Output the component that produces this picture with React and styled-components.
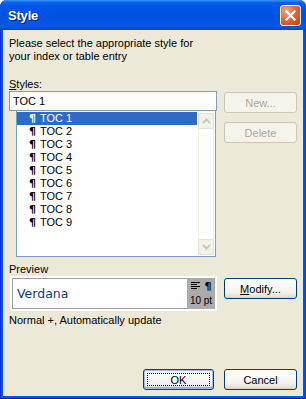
import React from "react";
import styled, { createGlobalStyle } from "styled-components";

const Global = createGlobalStyle`
  html, body { margin: 0; padding: 0; background: #ffffff; }
  body { font-family: "Liberation Sans", Arial, sans-serif; }
  * { box-sizing: border-box; }
`;

const Window = styled.div`
  width: 306px;
  height: 399px;
  display: flex;
  flex-direction: column;
  background: #0055e5;
  border-radius: 7px 7px 0 0;
  overflow: hidden;
  box-shadow: inset 1px 0 #0831d9, inset -1px 0 #0831d9, inset 0 -1px #001ea0;
`;

const TitleBar = styled.div`
  height: 30px;
  flex: none;
  display: flex;
  align-items: center;
  justify-content: space-between;
  padding: 0 5px 0 8px;
  background: linear-gradient(
    180deg,
    #3d95ff 0%,
    #0a62f0 8%,
    #0055e5 20%,
    #0052e0 60%,
    #0058ea 85%,
    #0050dd 94%,
    #0040c8 100%
  );
`;

const Title = styled.span`
  color: #ffffff;
  font: bold 13px "Liberation Sans", Arial, sans-serif;
  text-shadow: 1px 1px 0 #0a1e8c;
  letter-spacing: -0.2px;
`;

const CloseButton = styled.div`
  width: 21px;
  height: 21px;
  border: 1px solid #ffffff;
  border-radius: 3px;
  background: radial-gradient(circle at 30% 25%, #f0a58d 0%, #e2663f 45%, #c8401b 100%);
  display: flex;
  align-items: center;
  justify-content: center;
  margin-top: 1px;
`;

const Content = styled.div`
  flex: 1;
  margin: 0 3px 3px 3px;
  background: #ece9d8;
  display: flex;
  flex-direction: column;
  padding: 7px 6px 6px 6px;
  font: 11px "Liberation Sans", Arial, sans-serif;
  color: #000;
`;

const Text = styled.div`
  line-height: 13px;
  margin-top: ${(p) => p.$mt || 0}px;
  margin-left: ${(p) => p.$ml || 0}px;
  white-space: nowrap;
`;

const Section = styled.div`
  display: flex;
  gap: 7px;
  margin-top: ${(p) => p.$mt || 0}px;
`;

const LeftCol = styled.div`
  width: 208px;
  display: flex;
  flex-direction: column;
`;

const RightCol = styled.div`
  width: 73px;
  display: flex;
  flex-direction: column;
  gap: 9px;
  padding-top: ${(p) => p.$pt || 0}px;
`;

const Input = styled.div`
  height: 20px;
  border: 1px solid #7f9db9;
  background: #fff;
  padding: 0 3px;
  line-height: 18px;
`;

const List = styled.div`
  width: 200px;
  height: 147px;
  margin: -1px 0 0 7px;
  border: 1px solid #7f9db9;
  background: #fff;
  display: flex;
  padding: 1px 1px 1px 0;
`;

const Items = styled.div`
  flex: 1;
  display: flex;
  flex-direction: column;
  margin-right: 1px;
`;

const Item = styled.div`
  height: 13px;
  line-height: 13px;
  display: flex;
  align-items: center;
  padding-left: 12px;
  background: ${(p) => (p.$sel ? "#316ac5" : "transparent")};
  color: ${(p) => (p.$sel ? "#fff" : "#000")};
`;

const Pilcrow = styled.span`
  font: bold 11px "DejaVu Sans", sans-serif;
  width: 11px;
`;

const ScrollBar = styled.div`
  width: 16px;
  margin-top: 1px;
  display: flex;
  flex-direction: column;
  justify-content: space-between;
  background: #fdfdf9;
  border-left: 1px solid #f0efe8;
  border-right: 1px solid #f0efe8;
`;

const Arrow = styled.div`
  height: 16px;
  margin: 0 -1px;
  border: 1px solid #e6e4da;
  border-radius: 2px;
  background: #f3f2ea;
  display: flex;
  align-items: center;
  justify-content: center;
`;

const Button = styled.div`
  position: relative;
  width: ${(p) => p.$w || 73}px;
  height: 21px;
  border: 1px solid ${(p) => (p.$disabled ? "#c9c7ba" : "#003c74")};
  border-radius: 3px;
  background: ${(p) =>
    p.$disabled
      ? "#f5f4ea"
      : "linear-gradient(180deg, #ffffff 0%, #fbfbf9 35%, #f0efea 75%, #e3e0d6 92%, #d6d0c5 100%)"};
  color: ${(p) => (p.$disabled ? "#aca899" : "#000")};
  display: flex;
  align-items: center;
  justify-content: center;
  box-shadow: ${(p) => (p.$default ? "inset 0 0 0 1px #a6c1ee, inset 0 -1px 0 1px #89ade4" : "none")};
  &::after {
    content: "";
    display: ${(p) => (p.$default ? "block" : "none")};
    position: absolute;
    inset: 3px;
    border: 1px dotted #000;
  }
`;

const PreviewRow = styled.div`
  display: flex;
  gap: 7px;
`;

const PreviewFrame = styled.div`
  width: 207px;
  height: 35px;
  margin-left: 1px;
  background: #fff;
  padding: 2px;
  display: flex;
`;

const PreviewText = styled.div`
  flex: 1;
  border: 1px solid #a0a0a0;
  border-right: none;
  display: flex;
  align-items: center;
  padding-left: 4px;
  font: 12.5px "DejaVu Sans", Verdana, sans-serif;
  color: #0b3d7c;
`;

const PreviewInfo = styled.div`
  width: 28px;
  background: #ababab;
  display: flex;
  flex-direction: column;
  align-items: center;
  padding-top: 3px;
  font: 10px "Liberation Sans", Arial, sans-serif;
  color: #000;
`;

const InfoIcons = styled.div`
  display: flex;
  align-items: center;
  gap: 5px;
  height: 10px;
  font: bold 11px "DejaVu Sans", sans-serif;
`;

const BottomRow = styled.div`
  margin-top: auto;
  display: flex;
  justify-content: flex-end;
  gap: 10px;
`;

const ModifyCol = styled.div`
  padding-top: 2px;
`;

const Chevron = ({ up }) => (
  <svg width="9" height="6" viewBox="0 0 9 6">
    <path
      d={up ? "M1 5 L4.5 1.5 L8 5" : "M1 1 L4.5 4.5 L8 1"}
      fill="none"
      stroke="#cac8bb"
      strokeWidth="2"
    />
  </svg>
);

const items = ["TOC 1", "TOC 2", "TOC 3", "TOC 4", "TOC 5", "TOC 6", "TOC 7", "TOC 8", "TOC 9"];

export default function App() {
  return (
    <>
      <Global />
      <Window>
        <TitleBar>
          <Title>Style</Title>
          <CloseButton>
            <svg width="11" height="11" viewBox="0 0 11 11">
              <path d="M1.5 1.5 L9.5 9.5 M9.5 1.5 L1.5 9.5" stroke="#fff" strokeWidth="2.2" strokeLinecap="square" />
            </svg>
          </CloseButton>
        </TitleBar>
        <Content>
          <Text>Please select the appropriate style for</Text>
          <Text>your index or table entry</Text>
          <Section $mt={15}>
            <LeftCol>
              <Text>
                <u>S</u>tyles:
              </Text>
              <Input>TOC 1</Input>
              <List>
                <Items>
                  {items.map((t, i) => (
                    <Item key={t} $sel={i === 0}>
                      <Pilcrow>¶</Pilcrow>
                      {t}
                    </Item>
                  ))}
                </Items>
                <ScrollBar>
                  <Arrow>
                    <Chevron up />
                  </Arrow>
                  <Arrow>
                    <Chevron />
                  </Arrow>
                </ScrollBar>
              </List>
            </LeftCol>
            <RightCol $pt={14}>
              <Button $disabled>New...</Button>
              <Button $disabled>Delete</Button>
            </RightCol>
          </Section>
          <Text $mt={6}>Preview</Text>
          <PreviewRow>
            <PreviewFrame>
              <PreviewText>Verdana</PreviewText>
              <PreviewInfo>
                <InfoIcons>
                  <svg width="9" height="8" viewBox="0 0 9 8">
                    <path d="M0 0.5 H9 M0 2.5 H6 M0 4.5 H9 M0 6.5 H6" stroke="#000" strokeWidth="1" />
                  </svg>
                  <span>¶</span>
                </InfoIcons>
                <Text $mt={3}>10 pt</Text>
              </PreviewInfo>
            </PreviewFrame>
            <ModifyCol>
              <Button>
                <span>
                  <u>M</u>odify...
                </span>
              </Button>
            </ModifyCol>
          </PreviewRow>
          <Text $mt={3}>Normal +, Automatically update</Text>
          <BottomRow>
            <Button $w={71} $default>
              OK
            </Button>
            <Button $w={73}>Cancel</Button>
          </BottomRow>
        </Content>
      </Window>
    </>
  );
}
